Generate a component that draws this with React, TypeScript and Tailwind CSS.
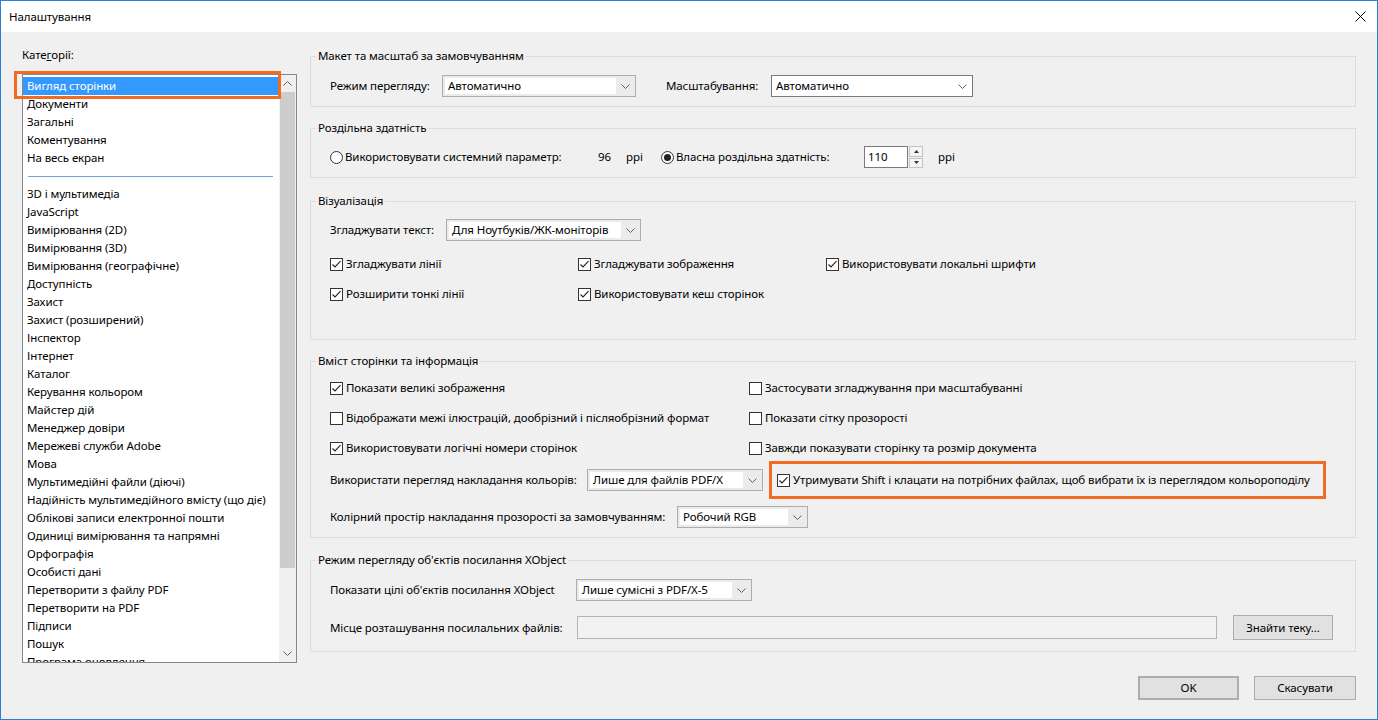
import React from 'react';

const categories = [
  'Вигляд сторінки',
  'Документи',
  'Загальні',
  'Коментування',
  'На весь екран',
  '-',
  '3D і мультимедіа',
  'JavaScript',
  'Вимірювання (2D)',
  'Вимірювання (3D)',
  'Вимірювання (географічне)',
  'Доступність',
  'Захист',
  'Захист (розширений)',
  'Інспектор',
  'Інтернет',
  'Каталог',
  'Керування кольором',
  'Майстер дій',
  'Менеджер довіри',
  'Мережеві служби Adobe',
  'Мова',
  'Мультимедійні файли (діючі)',
  'Надійність мультимедійного вмісту (що діє)',
  'Облікові записи електронної пошти',
  'Одиниці вимірювання та напрямні',
  'Орфографія',
  'Особисті дані',
  'Перетворити з файлу PDF',
  'Перетворити на PDF',
  'Підписи',
  'Пошук',
  'Програма оновлення',
];

const Chevron = ({ up = false }: { up?: boolean }) => (
  <svg width="9" height="5" viewBox="0 0 9 5" className={up ? 'rotate-180' : ''}>
    <path d="M0.5 0.5 L4.5 4.5 L8.5 0.5" fill="none" stroke="#606060" strokeWidth="1" />
  </svg>
);

const Checkbox = ({ checked = false, label }: { checked?: boolean; label: string }) => (
  <label className="flex items-center gap-[3px] h-4 whitespace-nowrap">
    <svg width="13" height="13" viewBox="0 0 13 13" className="shrink-0">
      <rect x="0.5" y="0.5" width="12" height="12" fill="#fff" stroke="#333" />
      {checked && <path d="M2.5 6.5 L5 9 L10.5 3.2" fill="none" stroke="#222" strokeWidth="1.1" />}
    </svg>
    {label}
  </label>
);

const Radio = ({ checked = false, label, className = '' }: { checked?: boolean; label: string; className?: string }) => (
  <label className={`flex items-center gap-[2px] whitespace-nowrap ${className}`}>
    <svg width="13" height="13" viewBox="0 0 13 13" className="shrink-0">
      <circle cx="6.5" cy="6.5" r="6" fill="#fff" stroke="#333" />
      {checked && <circle cx="6.5" cy="6.5" r="3.5" fill="#222" />}
    </svg>
    {label}
  </label>
);

// drop-down list: white text area, grey arrow part
const Select = ({ value, className = '' }: { value: string; className?: string }) => (
  <div className={`h-[22px] flex border border-[#adadad] bg-[#ebebeb] shrink-0 ${className}`}>
    <div className="flex-1 bg-white my-[2px] ml-[2px] pl-[3px] flex items-center whitespace-nowrap overflow-hidden">{value}</div>
    <div className="w-[19px] flex items-center justify-center">
      <Chevron />
    </div>
  </div>
);

// editable combo: all white, darker border
const Combo = ({ value, className = '' }: { value: string; className?: string }) => (
  <div className={`h-[22px] flex border border-[#7a7a7a] bg-white shrink-0 ${className}`}>
    <div className="flex-1 pl-[4px] flex items-center">{value}</div>
    <div className="w-[20px] flex items-center justify-center">
      <Chevron />
    </div>
  </div>
);

const Button = ({ children, className = '' }: { children: React.ReactNode; className?: string }) => (
  <button className={`bg-[#e1e1e1] border border-[#adadad] flex items-center justify-center ${className}`}>{children}</button>
);

const Group = ({ legend, className = '', children }: { legend: string; className?: string; children: React.ReactNode }) => (
  <fieldset className={`border border-[#dcdcdc] ${className}`}>
    <legend className="ml-[5px] px-[2px] leading-4">{legend}</legend>
    {children}
  </fieldset>
);

export default function App() {
  return (
    <div className="h-[720px] w-[1378px] flex flex-col bg-[#f0f0f0] border border-[#2b7fd4] text-[11.5px] tracking-[-0.1px] leading-4 text-black font-['Noto_Sans',sans-serif] overflow-hidden">
      {/* title bar */}
      <div className="h-[31px] bg-white flex items-center justify-between pl-2 pr-[11px] shrink-0">
        <span>Налаштування</span>
        <svg width="11" height="11" viewBox="0 0 11 11">
          <path d="M0.5 0.5 L10.5 10.5 M10.5 0.5 L0.5 10.5" stroke="#000" strokeWidth="1" />
        </svg>
      </div>

      <div className="flex-1 flex px-[21px] gap-[13px]">
        {/* categories */}
        <div className="w-[275px] pt-[15px] shrink-0">
          <div>
            Кате<span className="underline">г</span>орії:
          </div>
          <div className="relative mt-[11px]">
            <div className="h-[589px] border border-[#828790] bg-white flex overflow-hidden">
              <div className="flex-1 pt-[2px] pr-[1px]">
                {categories.map((c, i) =>
                  c === '-' ? (
                    <div key={i} className="h-[18px] flex items-center px-[5px]">
                      <div className="h-px w-full bg-[#6ea5db]" />
                    </div>
                  ) : (
                    <div
                      key={i}
                      className={`h-[18px] leading-[18px] pl-[4px] whitespace-nowrap ${i === 0 ? 'bg-[#3399ff] text-white' : ''}`}
                    >
                      {c}
                    </div>
                  )
                )}
              </div>
              <div className="w-[17px] bg-[#f0f0f0] flex flex-col shrink-0">
                <div className="h-[17px] flex items-center justify-center">
                  <Chevron up />
                </div>
                <div className="h-[476px] mx-[1px] bg-[#cdcdcd]" />
                <div className="flex-1" />
                <div className="h-[17px] flex items-center justify-center">
                  <Chevron />
                </div>
              </div>
            </div>
            {/* highlight annotation */}
            <div className="absolute left-[-8px] top-[-3px] w-[267px] h-[28px] border-[3px] border-[#f26b21]" />
          </div>
        </div>

        {/* settings */}
        <div className="flex-1 flex flex-col pt-[16px]">
          <Group legend="Макет та масштаб за замовчуванням">
            <div className="flex items-center pt-[11px] pb-[9px] pl-[19px]">
              <span className="w-[112px]">Режим перегляду:</span>
              <Select value="Автоматично" className="w-[194px]" />
              <span className="ml-[30px] w-[105px]">Масштабування:</span>
              <Combo value="Автоматично" className="w-[202px]" />
            </div>
          </Group>

          <Group legend="Роздільна здатність" className="mt-[13px]">
            <div className="flex items-center pt-[10px] pb-[9px] pl-[19px]">
              <Radio label="Використовувати системний параметр:" className="w-[268px]" />
              <span className="w-[28px]">96</span>
              <span className="w-[35px]">ppi</span>
              <Radio checked label="Власна роздільна здатність:" className="w-[203px]" />
              <div className="flex h-[22px]">
                <div className="w-[44px] border border-[#7a7a7a] bg-white pl-[3px] flex items-center">110</div>
                <div className="w-[14px] flex flex-col gap-px ml-px">
                  <div className="flex-1 border border-[#c4c4c4] bg-[#f5f5f5] flex items-center justify-center">
                    <svg width="5" height="3" viewBox="0 0 5 3"><path d="M0 3 L2.5 0 L5 3 Z" fill="#333" /></svg>
                  </div>
                  <div className="flex-1 border border-[#c4c4c4] bg-[#f5f5f5] flex items-center justify-center">
                    <svg width="5" height="3" viewBox="0 0 5 3"><path d="M0 0 L2.5 3 L5 0 Z" fill="#333" /></svg>
                  </div>
                </div>
              </div>
              <span className="ml-[15px]">ppi</span>
            </div>
          </Group>

          <Group legend="Візуалізація" className="mt-[15px]">
            <div className="pt-[10px] pb-[37px] pl-[19px]">
              <div className="flex items-center">
                <span className="w-[116px]">Згладжувати текст:</span>
                <Select value="Для Ноутбуків/ЖК-моніторів" className="w-[195px]" />
              </div>
              <div className="grid grid-cols-[248px_248px_248px] gap-y-[14px] mt-[15px]">
                <Checkbox checked label="Згладжувати лінії" />
                <Checkbox checked label="Згладжувати зображення" />
                <Checkbox checked label="Використовувати локальні шрифти" />
                <Checkbox checked label="Розширити тонкі лінії" />
                <Checkbox checked label="Використовувати кеш сторінок" />
              </div>
            </div>
          </Group>

          <Group legend="Вміст сторінки та інформація" className="mt-[13px]">
            <div className="pt-[11px] pb-[9px] pl-[19px]">
              <div className="grid grid-cols-[419px_1fr] gap-y-[14px]">
                <Checkbox checked label="Показати великі зображення" />
                <Checkbox label="Застосувати згладжування при масштабуванні" />
                <Checkbox label="Відображати межі ілюстрацій, дообрізний і післяобрізний формат" />
                <Checkbox label="Показати сітку прозорості" />
                <Checkbox checked label="Використовувати логічні номери сторінок" />
                <Checkbox label="Завжди показувати сторінку та розмір документа" />
              </div>
              <div className="flex items-center mt-[5px]">
                <span className="w-[257px] whitespace-nowrap">Використати перегляд накладання кольорів:</span>
                <Select value="Лише для файлів PDF/X" className="w-[176px]" />
                <div className="ml-[6px] w-[557px] h-[38px] border-[3px] border-[#f26b21] flex items-center pl-[5px]">
                  <Checkbox checked label="Утримувати Shift і клацати на потрібних файлах, щоб вибрати їх із переглядом кольороподілу" />
                </div>
              </div>
              <div className="flex items-center mt-[7px]">
                <span className="w-[347px] whitespace-nowrap">Колірний простір накладання прозорості за замовчуванням:</span>
                <Select value="Робочий RGB" className="w-[131px]" />
              </div>
            </div>
          </Group>

          <Group legend="Режим перегляду об'єктів посилання XObject" className="mt-[14px]">
            <div className="pt-[11px] pb-[11px] pl-[19px] pr-[22px]">
              <div className="flex items-center">
                <span className="w-[246px] whitespace-nowrap">Показати цілі об'єктів посилання XObject</span>
                <Select value="Лише сумісні з PDF/X-5" className="w-[176px]" />
              </div>
              <div className="flex items-center mt-[14px]">
                <span className="w-[247px] whitespace-nowrap">Місце розташування посилальних файлів:</span>
                <div className="w-[640px] h-[23px] border border-[#b4b4b4] bg-[#f2f2f2]" />
                <Button className="ml-[16px] w-[100px] h-[25px]">Знайти теку...</Button>
              </div>
            </div>
          </Group>

          <div className="flex justify-end gap-[15px] mt-[24px]">
            <Button className="w-[101px] h-[24px] border-2 border-[#0078d7]">OK</Button>
            <Button className="w-[102px] h-[24px]">Скасувати</Button>
          </div>
        </div>
      </div>
    </div>
  );
}
